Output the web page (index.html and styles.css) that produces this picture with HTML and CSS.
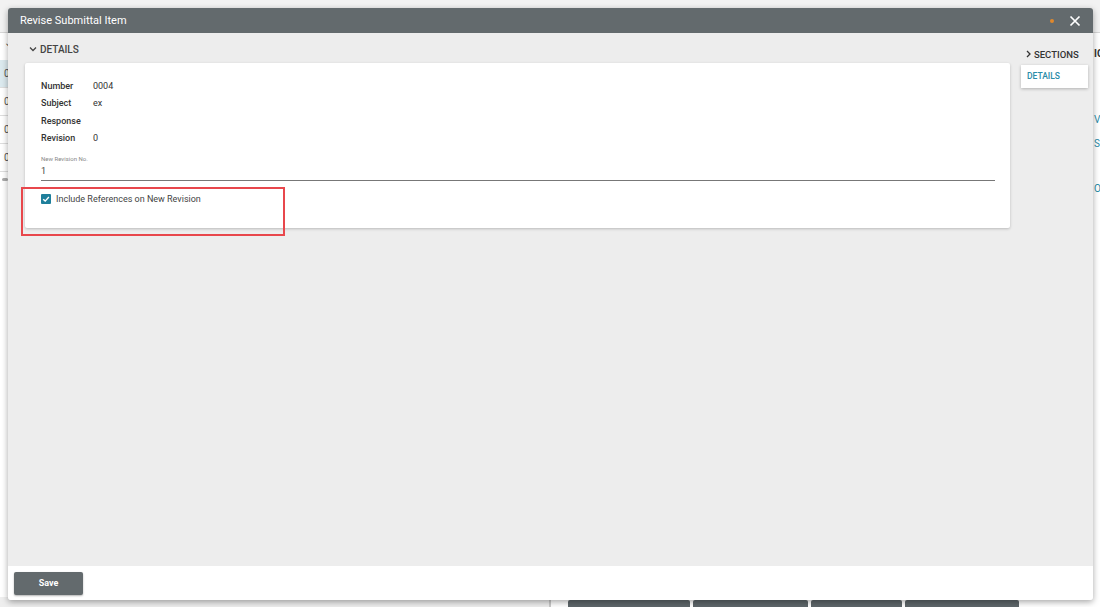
FILE: index.html
```html
<!DOCTYPE html>
<html lang="en">
<head>
    <meta charset="UTF-8">
    <meta name="viewport" content="width=device-width, initial-scale=1.0">
    <title>Revise Submittal Item</title>
    <link rel="stylesheet" href="styles.css">
</head>
<body>
    <div class="page">
        <div class="page-top"></div>
        <div class="page-main">
            <div class="page-list">
                <div class="list-head"><span class="list-chev">&#8964;</span></div>
                <div class="list-row active">0</div>
                <div class="list-row">0</div>
                <div class="list-row">0</div>
                <div class="list-row">0</div>
                <div class="list-scroll"></div>
            </div>
            <div class="page-center"></div>
            <div class="page-side">
                <div class="side-head">ICONS</div>
                <div class="side-link l1">VIEW</div>
                <div class="side-link l2">SEND</div>
                <div class="side-link l3">OPEN</div>
            </div>
        </div>
        <div class="page-bottom">
            <div class="bottom-left"></div>
            <div class="bottom-btns">
                <span class="bbtn w1"></span>
                <span class="bbtn w2"></span>
                <span class="bbtn w3"></span>
                <span class="bbtn w4"></span>
            </div>
        </div>
    </div>

    <div class="modal">
        <div class="modal-header">
            <span class="modal-title">Revise Submittal Item</span>
            <span class="modal-dot"></span>
            <button class="modal-close" aria-label="Close">
                <svg width="12" height="12" viewBox="0 0 12 12"><path d="M1.5 1.5 L10.5 10.5 M10.5 1.5 L1.5 10.5" stroke="#fff" stroke-width="1.7" fill="none"/></svg>
            </button>
        </div>
        <div class="modal-body">
            <div class="main-col">
                <div class="section-head">
                    <svg class="chev" width="8" height="8" viewBox="0 0 8 8"><path d="M1 2.5 L4 5.5 L7 2.5" stroke="#444" stroke-width="1.3" fill="none"/></svg>
                    <span>DETAILS</span>
                </div>
                <div class="card">
                    <div class="field-row"><span class="field-label">Number</span><span class="field-value">0004</span></div>
                    <div class="field-row"><span class="field-label">Subject</span><span class="field-value">ex</span></div>
                    <div class="field-row"><span class="field-label">Response</span><span class="field-value"></span></div>
                    <div class="field-row"><span class="field-label">Revision</span><span class="field-value">0</span></div>
                    <div class="input-group">
                        <div class="input-label">New Revision No.</div>
                        <div class="input-value">1</div>
                    </div>
                    <label class="check-row">
                        <span class="checkbox">
                            <svg width="10" height="10" viewBox="0 0 10 10"><path d="M2.2 5.2 L4.2 7.1 L7.9 3" stroke="#fff" stroke-width="1.4" fill="none"/></svg>
                        </span>
                        <span>Include References on New Revision</span>
                    </label>
                </div>
            </div>
            <div class="side-col">
                <div class="sections-head">
                    <svg class="chev" width="7" height="8" viewBox="0 0 7 8"><path d="M2 1 L5 4 L2 7" stroke="#333" stroke-width="1.3" fill="none"/></svg>
                    <span>SECTIONS</span>
                </div>
                <div class="sections-card">DETAILS</div>
            </div>
        </div>
        <div class="modal-footer">
            <button class="btn-save">Save</button>
        </div>
        <div class="highlight"></div>
    </div>
</body>
</html>
```

FILE: styles.css
```css
* {
    box-sizing: border-box;
}
body {
    margin: 0;
    width: 1100px;
    height: 607px;
    overflow: hidden;
    font-family: Roboto, "Liberation Sans", Arial, sans-serif;
    background-color: #fff;
    position: relative;
}

/* page behind the dialog */
.page {
    display: flex;
    flex-direction: column;
    height: 607px;
}
.page-top {
    height: 33px;
    background-color: #f2f2f2;
    border-bottom: 1px solid #d6d6d6;
}
.page-main {
    display: flex;
    flex: 1;
}
.page-list {
    width: 300px;
    background-color: #fff;
}
.list-head {
    height: 27px;
    padding-left: 4px;
    color: #555;
    font-size: 10px;
    line-height: 20px;
}
.list-row {
    height: 28px;
    border-bottom: 1px solid #ddd;
    padding-left: 4px;
    font-size: 10px;
    line-height: 28px;
    color: #555;
}
.list-row.active {
    background-color: #dbe9ee;
}
.list-scroll {
    width: 6px;
    height: 3px;
    margin: 6px 0 0 2px;
    background-color: #aaa;
    border-radius: 2px;
}
.page-center {
    flex: 1;
}
.page-side {
    width: 130px;
    position: relative;
    background-color: #fff;
    border-left: 1px solid #ddd;
}
.side-head {
    position: absolute;
    top: 15px;
    left: 123px;
    font-size: 10px;
    font-weight: 700;
    color: #333;
}
.side-link {
    position: absolute;
    left: 123px;
    font-size: 10px;
    color: #2a8ca8;
}
.l1 { top: 81px; }
.l2 { top: 105px; }
.l3 { top: 150px; }
.page-bottom {
    height: 10px;
    display: flex;
}
.bottom-left {
    width: 551px;
    background-color: #eee;
    border-right: 2px solid #c9c9c9;
}
.bottom-btns {
    display: flex;
    gap: 3px;
    padding: 3px 0 0 17px;
}
.bbtn {
    height: 10px;
    background-color: #5e666a;
    border-radius: 2px;
}
.w1 { width: 122px; }
.w2 { width: 115px; }
.w3 { width: 91px; }
.w4 { width: 114px; }

/* dialog */
.modal {
    position: absolute;
    left: 8px;
    top: 8px;
    width: 1085px;
    height: 592px;
    display: flex;
    flex-direction: column;
    background-color: #ededed;
    border-radius: 3px;
    box-shadow: 0 2px 6px rgba(0, 0, 0, 0.35);
}
.modal-header {
    height: 25px;
    display: flex;
    align-items: center;
    padding: 0 12px;
    background-color: #636a6d;
    border-radius: 3px 3px 0 0;
    color: #fff;
}
.modal-title {
    flex: 1;
    font-size: 11px;
}
.modal-dot {
    width: 4px;
    height: 4px;
    border-radius: 50%;
    background-color: #e0882c;
    margin-right: 15px;
}
.modal-close {
    border: none;
    background: none;
    padding: 0;
    width: 12px;
    height: 12px;
    cursor: pointer;
}
.modal-body {
    flex: 1;
    display: flex;
    gap: 11px;
    padding: 0 5px 0 17px;
}
.main-col {
    flex: 1;
}
.section-head {
    height: 30px;
    display: flex;
    align-items: center;
    gap: 3px;
    padding: 2px 0 0 4px;
    font-size: 10px;
    font-weight: 500;
    color: #444;
}
.card {
    background-color: #fff;
    border-radius: 2px;
    box-shadow: 0 1px 3px rgba(0, 0, 0, 0.22);
    padding: 14px 15px 24px 16px;
}
.field-row {
    display: flex;
    height: 17.5px;
    align-items: center;
    font-size: 9px;
    color: #333;
}
.field-label {
    width: 52px;
    font-weight: 500;
}
.input-group {
    margin-top: 7px;
    border-bottom: 1px solid #777;
    padding-bottom: 2px;
}
.input-label {
    font-size: 6px;
    color: #888;
    height: 9px;
    line-height: 9px;
}
.input-value {
    font-size: 9px;
    color: #444;
    height: 15px;
    line-height: 16px;
}
.check-row {
    display: flex;
    align-items: center;
    gap: 5px;
    margin-top: 13px;
    font-size: 9px;
    color: #444;
}
.checkbox {
    width: 10px;
    height: 10px;
    border-radius: 1px;
    background-color: #1f7f9b;
    display: flex;
}
.side-col {
    width: 67px;
}
.sections-head {
    height: 32px;
    display: flex;
    align-items: center;
    gap: 2px;
    padding: 10px 0 0 4px;
    font-size: 9.5px;
    font-weight: 500;
    color: #333;
    white-space: nowrap;
}
.sections-card {
    height: 23px;
    background-color: #fff;
    box-shadow: 0 1px 3px rgba(0, 0, 0, 0.25);
    padding-left: 6px;
    font-size: 8.5px;
    font-weight: 500;
    line-height: 23px;
    color: #2a8ca8;
}
.modal-footer {
    height: 34px;
    background-color: #fff;
    padding: 5px 6px;
    border-radius: 0 0 3px 3px;
}
.btn-save {
    width: 69px;
    height: 23px;
    border: none;
    border-radius: 2px;
    background-color: #636a6d;
    color: #fff;
    font-family: inherit;
    font-size: 9px;
    font-weight: 700;
    box-shadow: 0 1px 2px rgba(0, 0, 0, 0.3);
}

/* annotation box over the checkbox */
.highlight {
    position: absolute;
    left: 13px;
    top: 179px;
    width: 264px;
    height: 49px;
    border: 2px solid #e8474c;
    pointer-events: none;
}
```
